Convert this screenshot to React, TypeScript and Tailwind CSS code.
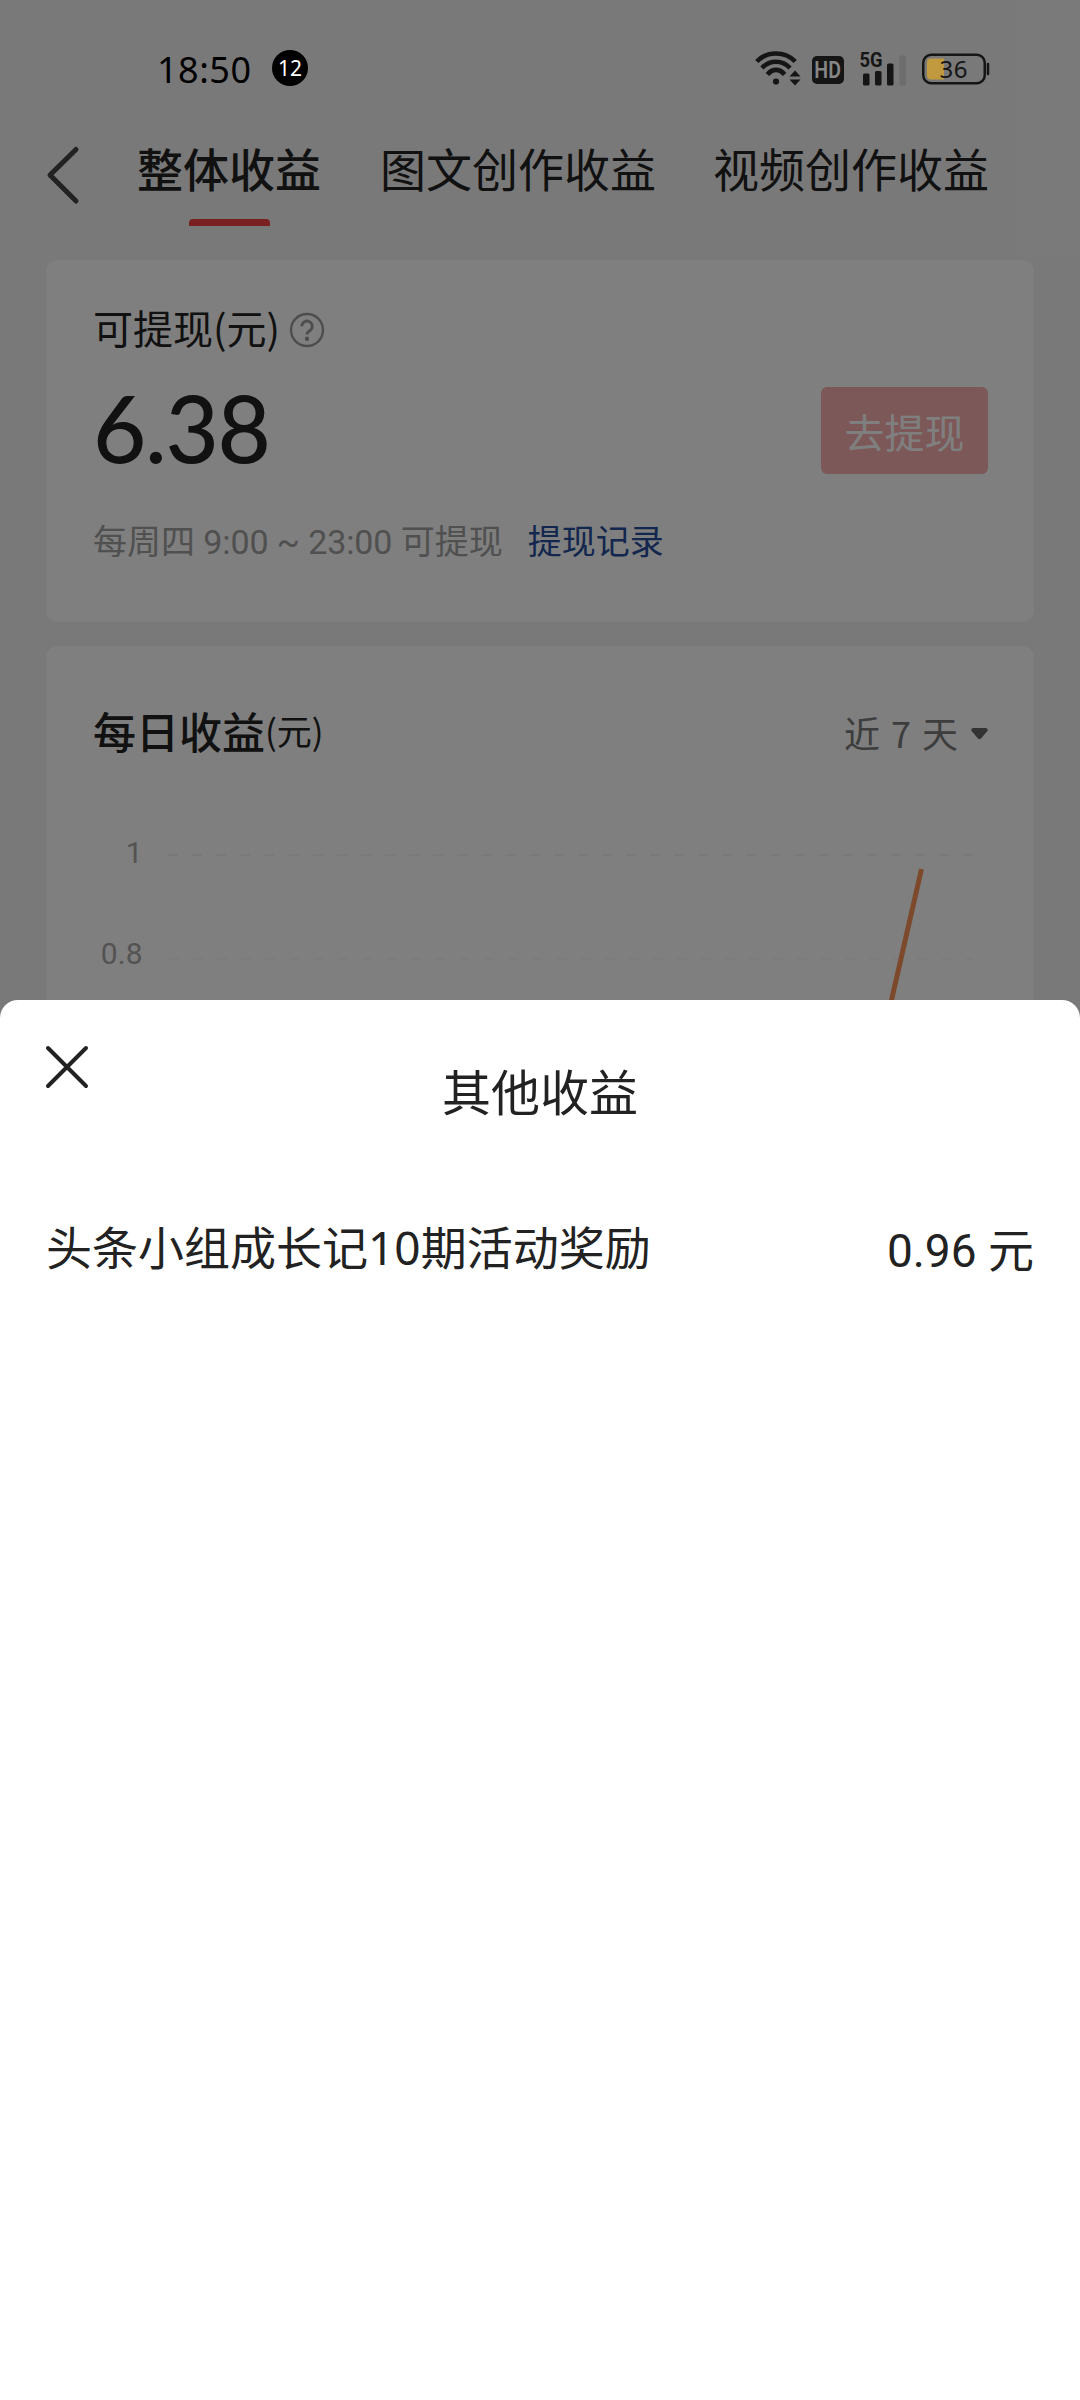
const CJK = "font-['Noto_Sans_CJK_SC',sans-serif]";
const ROBOTO = "font-[Roboto,'Noto_Sans_CJK_SC',sans-serif]";

function StatusBar() {
  return (
    <header className="relative z-20 flex h-[136px] items-center pl-[157px] pr-[89px] text-black">
      <span className="mt-[3px] w-[93px] whitespace-nowrap font-['Noto_Sans',sans-serif] text-[36px] leading-[50px] tracking-[0.5px]">18:50</span>
      <span className="ml-[22px] flex size-9 items-center justify-center rounded-full bg-black font-['Noto_Sans',sans-serif] text-[21px] leading-[30px] text-white">
        12
      </span>
      <svg className="ml-auto h-[36px] w-[48px]" viewBox="0 0 48 36" fill="none" stroke="#151515">
        <path d="M1.800 11.500C12 0.800 30 0.800 40.200 11.500" strokeWidth="4.600" />
        <path d="M7 18C14.500 9.600 27.500 9.600 35 18" strokeWidth="4.600" />
        <path d="M12.400 24.500C17.500 18.300 24.500 18.300 29.600 24.500" strokeWidth="4.600" />
        <circle cx="21" cy="31.500" r="3.100" fill="#151515" stroke="none" />
        <path d="M40 20.500l5.500 6h-11zM40 35.500l5.500-6h-11z" fill="#151515" stroke="none" />
      </svg>
      <span className="ml-[9px] mt-1 flex h-[28px] w-[32px] items-center justify-center rounded-[5px] bg-[#151515]">
        <span className="mt-px scale-x-[0.85] font-[Roboto,sans-serif] text-[23px] font-semibold leading-[28px] text-[#868686]">HD</span>
      </span>
      <svg className="ml-[16px] h-[46px] w-[46px]" viewBox="0 -5 46 46" fill="#151515">
        <text x="-0.500" y="17" fontFamily="Roboto, sans-serif" fontSize="20.500" fontWeight="700" textLength="23" lengthAdjust="spacingAndGlyphs">5G</text>
        <rect x="3" y="23.500" width="6.500" height="12" rx="1.500" />
        <rect x="15" y="21" width="6.500" height="14.500" rx="1.500" />
        <rect x="27" y="13.500" width="6.500" height="22" rx="1.500" />
        <rect x="39.500" y="5.500" width="6.500" height="30" rx="1.500" fill="#6d6d6d" />
      </svg>
      <svg className="ml-[16px] h-[36px] w-[69px]" viewBox="0 0 69 36" fill="none">
        <rect x="1.250" y="4.750" width="61.500" height="28.500" rx="8" stroke="#151515" strokeWidth="2.500" />
        <path d="M22 8.500H9q-4 0-4 4v13q0 4 4 4h13z" fill="#c19a3f" />
        <path d="M66 14v10" stroke="#151515" strokeWidth="2.500" strokeLinecap="round" />
        <text x="17.500" y="27.500" fontFamily="'Noto Sans', sans-serif" fontSize="24" fill="#151515" textLength="28">36</text>
      </svg>
    </header>
  );
}

function Tabs() {
  return (
    <nav className={`flex h-[124px] items-start ${CJK} text-[46px] leading-[60px] text-[#222]`}>
      <svg className="ml-[46px] mt-[9px] h-[60px] w-[34px]" viewBox="0 0 34 60" fill="none" stroke="#444" strokeWidth="5" strokeLinecap="round" strokeLinejoin="round">
        <path d="M30 4.500L4 30l26 26" />
      </svg>
      <div className="ml-[57px] mt-px flex flex-col items-center">
        <span className="font-medium">整体收益</span>
        <i className="mt-[22px] h-[7px] w-[81px] rounded-t-[4px] bg-[#f43f44]" />
      </div>
      <span className="ml-[59px] mt-px">图文创作收益</span>
      <span className="ml-[57px] mt-px">视频创作收益</span>
    </nav>
  );
}

function BalanceCard() {
  return (
    <section className="mx-[46px] h-[362px] rounded-[12px] bg-white pl-[47px] pr-[46px]">
      <div className="flex items-center pt-[42px]">
        <span className={`${CJK} text-[40px] leading-[50px] text-[#222]`}>可提现(元)</span>
        <svg className="ml-[9px] mt-[5px] size-[36px]" viewBox="0 0 36 36" fill="none" stroke="#9a9a9a" strokeWidth="2.400">
          <circle cx="18" cy="18" r="16" />
          <path d="M12.800 14.300a5.200 5.200 0 1 1 8.200 4.200c-2 1.300-3 2-3 4" strokeWidth="2.800" />
          <circle cx="18" cy="26.800" r="2.200" fill="#9a9a9a" stroke="none" />
        </svg>
      </div>
      <div className="mt-[35px] flex h-[87px] items-center justify-between">
        <span className="-mt-[7px] font-[Lato,sans-serif] text-[92px] font-medium leading-[87px] tracking-[-1.300px] text-[#222]">6.38</span>
        <button className={`h-[87px] w-[167px] rounded-[6px] bg-[#fab0b0] ${CJK} text-[40px] text-white`}>去提现</button>
      </div>
      <div className="mt-[43px] flex items-center text-[34px] leading-[50px]">
        <span className={`${ROBOTO} whitespace-nowrap text-[#a0a0a0]`}>
          每周四<span className="tracking-[-0.100px]"> 9:00 ~ 23:00 </span>可提现
        </span>
        <a className={`ml-[25px] ${ROBOTO} text-[#264e9c]`}>提现记录</a>
      </div>
    </section>
  );
}

function DailyCard() {
  return (
    <section className="mx-[46px] mt-[24px] h-[600px] rounded-[12px] bg-white pl-[47px] pr-[46px] pt-[60px]">
      <div className={`flex h-[52px] items-center justify-between ${CJK}`}>
        <h2 className="-mt-[4px] flex text-[43px] leading-[52px] text-[#222]">
          <span className="font-medium">每日收益</span>
          <span className="text-[35px]">(元)</span>
        </h2>
        <div className="flex items-center text-[36px] leading-[52px] text-[#7a7a7a]">
          <span className="[word-spacing:3px]">近 7 天</span>
          <svg className="ml-[13px] mt-[4px] h-[12px] w-[17px]" viewBox="0 0 17 12" fill="#666">
            <path d="M2 0h13q3 1 1 3.500l-6 7q-1.500 1.500-3 0l-6-7Q-1 1 2 0z" />
          </svg>
        </div>
      </div>
      <svg className="h-[250px] w-[893px]" viewBox="0 0 893 250" fill="none">
        <g fontFamily="Roboto, sans-serif" fontSize="30" fill="#a6a6a6" textAnchor="end">
          <text x="49.500" y="105">1</text>
          <text x="49.500" y="206">0.8</text>
        </g>
        <path d="M75 97H880" stroke="#f2f2f2" strokeWidth="2" strokeDasharray="10 14.100" />
        <path d="M77 201H880" stroke="#f9f9f9" strokeWidth="2" strokeDasharray="10 14.100" />
        <path d="M828.500 111L796.700 250" stroke="#f99256" strokeWidth="5" />
      </svg>
    </section>
  );
}

function EarningsSheet() {
  return (
    <div className="absolute inset-x-0 bottom-0 top-[1000px] z-30 rounded-t-[18px] bg-white text-[#222]">
      <svg className="absolute left-[45px] top-[45px] size-[44px]" viewBox="0 0 44 44" fill="none" stroke="#222" strokeWidth="4" strokeLinecap="round">
        <path d="M3 3l38 38M41 3L3 41" />
      </svg>
      <h1 className={`pt-[60px] text-center ${CJK} text-[49px] leading-[60px]`}>其他收益</h1>
      <div className="mt-[95px] flex items-start justify-between px-[46px] text-[46px] leading-[66px]">
        <span className={`-mt-[3px] ${CJK}`}>
          头条小组成长记<span className="font-['Noto_Sans',sans-serif]">10</span>期活动奖励
        </span>
        <span className={`mt-[3px] ${ROBOTO}`}>0.96 元</span>
      </div>
    </div>
  );
}

export default function App() {
  return (
    <main className="relative h-[2400px] w-[1080px] overflow-hidden bg-[#f3f3f3]">
      <StatusBar />
      <Tabs />
      <BalanceCard />
      <DailyCard />
      <div className="absolute inset-0 z-10 bg-black/50" />
      <EarningsSheet />
    </main>
  );
}
